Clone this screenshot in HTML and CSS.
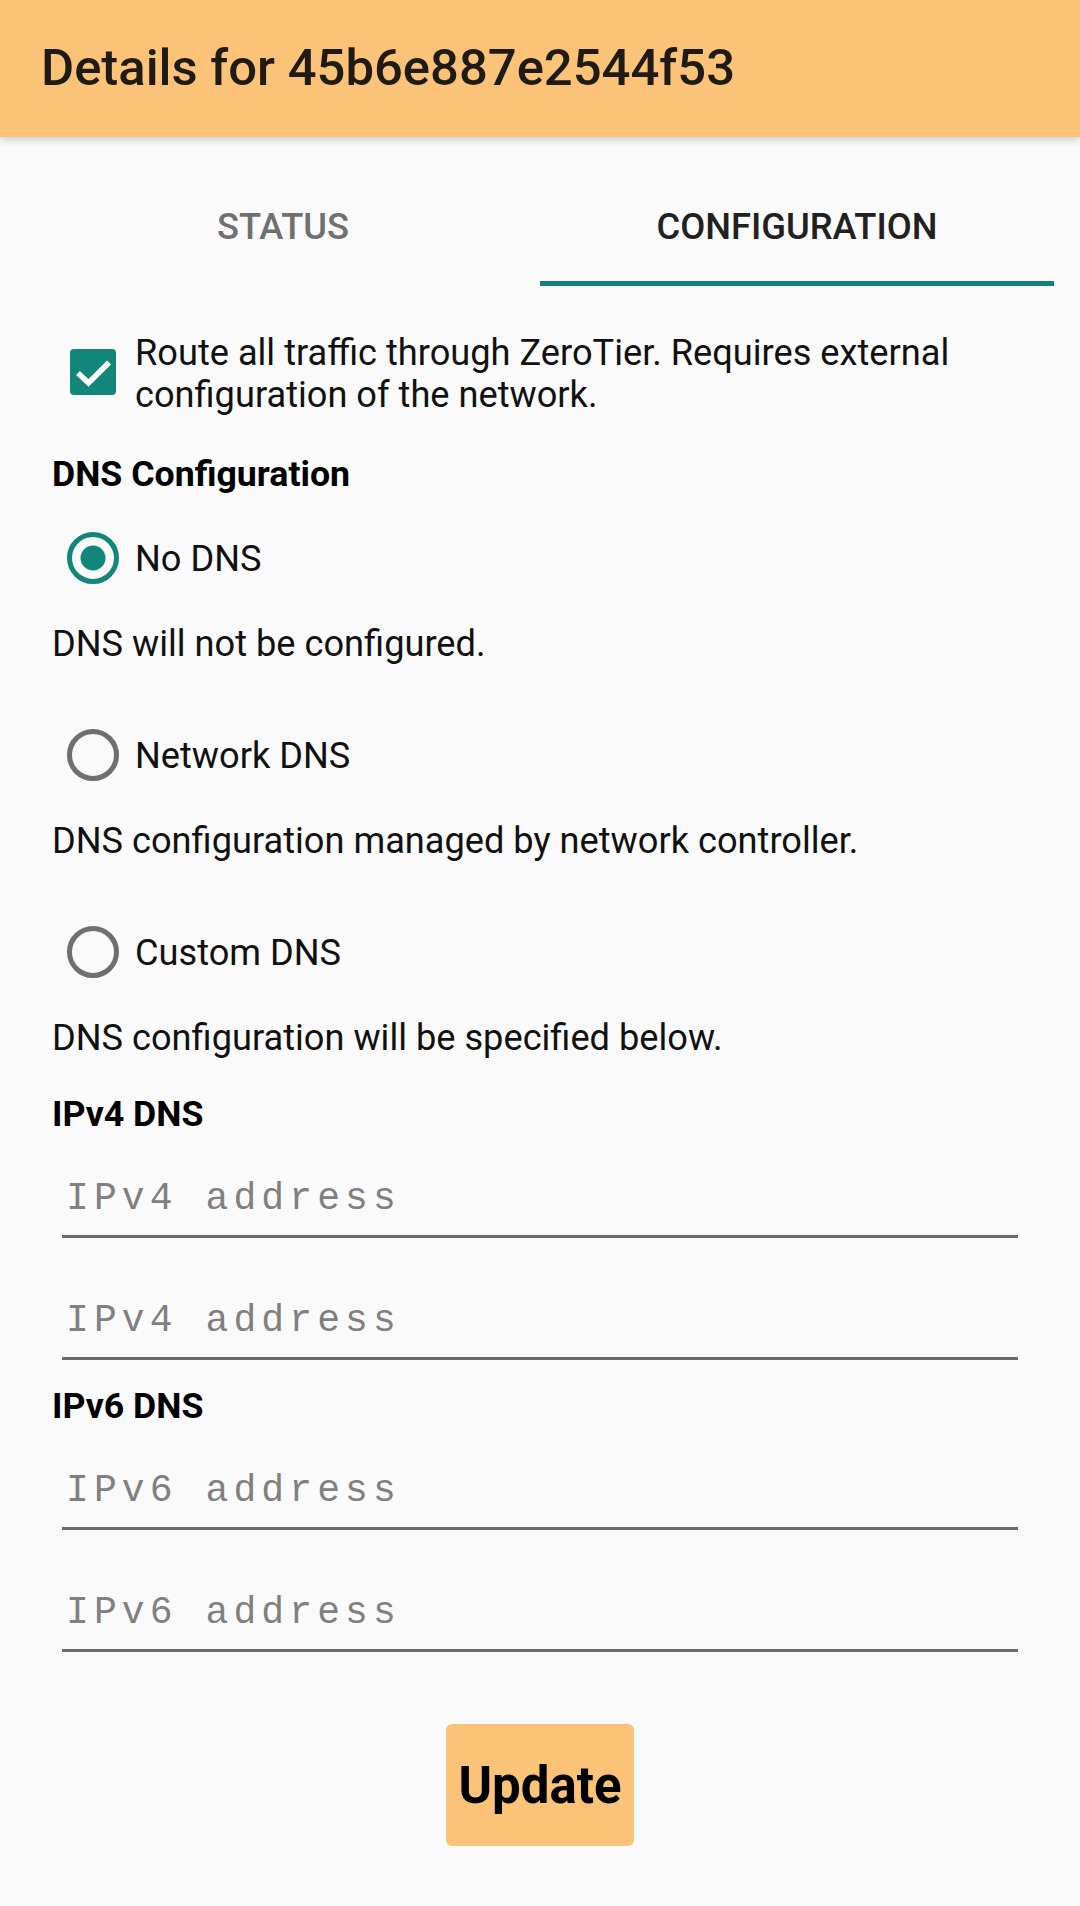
FILE: index.html
```html
<!DOCTYPE html>
<html lang="en">
<head>
<meta charset="utf-8">
<title>Details</title>
<link rel="stylesheet" href="styles.css">
</head>
<body>
<header class="appbar">
  <h1 class="appbar-title">Details for 45b6e887e2544f53</h1>
</header>
<nav class="tabs">
  <div class="tab">STATUS</div>
  <div class="tab tab-active">CONFIGURATION</div>
</nav>
<main class="content">
  <div class="check-row">
    <svg class="checkbox" viewBox="0 0 46 46" width="46" height="46">
      <rect x="0" y="0" width="46" height="46" rx="4" fill="#12867a"/>
      <polyline points="8,24 18.5,34 39,13.5" fill="none" stroke="#ffffff" stroke-width="5.5"/>
    </svg>
    <div class="check-label">Route all traffic through ZeroTier. Requires external configuration of the network.</div>
  </div>

  <div class="heading heading-dns">DNS Configuration</div>

  <div class="radio-group">
    <div class="radio-row">
      <svg class="radio" viewBox="0 0 52 52" width="52" height="52">
        <circle cx="26" cy="26" r="23.5" fill="none" stroke="#12867a" stroke-width="5"/>
        <circle cx="26" cy="26" r="12.5" fill="#12867a"/>
      </svg>
      <span class="radio-label">No DNS</span>
    </div>
    <div class="desc">DNS will not be configured.</div>
  </div>

  <div class="radio-group">
    <div class="radio-row">
      <svg class="radio" viewBox="0 0 52 52" width="52" height="52">
        <circle cx="26" cy="26" r="23.5" fill="none" stroke="#6f6f6f" stroke-width="5"/>
      </svg>
      <span class="radio-label">Network DNS</span>
    </div>
    <div class="desc">DNS configuration managed by network controller.</div>
  </div>

  <div class="radio-group">
    <div class="radio-row">
      <svg class="radio" viewBox="0 0 52 52" width="52" height="52">
        <circle cx="26" cy="26" r="23.5" fill="none" stroke="#6f6f6f" stroke-width="5"/>
      </svg>
      <span class="radio-label">Custom DNS</span>
    </div>
    <div class="desc">DNS configuration will be specified below.</div>
  </div>

  <div class="heading heading-ip">IPv4 DNS</div>
  <div class="field"><span class="placeholder">IPv4 address</span></div>
  <div class="field field-next"><span class="placeholder">IPv4 address</span></div>

  <div class="heading heading-ip6">IPv6 DNS</div>
  <div class="field"><span class="placeholder">IPv6 address</span></div>
  <div class="field field-next"><span class="placeholder">IPv6 address</span></div>

  <div class="actions">
    <button class="update-btn" type="button">Update</button>
  </div>
</main>
</body>
</html>
```

FILE: styles.css
```css
* {
  box-sizing: border-box;
}

html, body {
  margin: 0;
  padding: 0;
}

body {
  width: 1080px;
  min-height: 1906px;
  background: #fafafa;
  font-family: Roboto, "Noto Sans", "Liberation Sans", sans-serif;
  color: #1a1a1a;
  overflow: hidden;
}

.appbar {
  height: 137px;
  background: #fbc378;
  display: flex;
  align-items: center;
  padding-left: 41px;
  box-shadow: 0 3px 8px rgba(0, 0, 0, 0.18);
  position: relative;
  z-index: 1;
}

.appbar-title {
  margin: 0;
  font-size: 50.8px;
  font-weight: 500;
  color: #1f1b14;
  line-height: 1;
}

.tabs {
  display: flex;
  margin: 0 26px;
}

.tab {
  flex: 1;
  height: 149px;
  padding-top: 35px;
  display: flex;
  align-items: center;
  justify-content: center;
  font-size: 36.3px;
  font-weight: 500;
  color: #707070;
  border-bottom: 5px solid transparent;
}

.tab-active {
  color: #212121;
  border-bottom-color: #12807a;
}

.content {
  padding: 0 52px;
}

.check-row {
  display: flex;
  align-items: flex-start;
  margin-top: 46px;
}

.checkbox {
  flex: none;
  margin-left: 18px;
  margin-top: 17px;
}

.check-label {
  margin-left: 19px;
  font-size: 36.2px;
  line-height: 42px;
  color: #111;
}

.heading {
  font-size: 35.7px;
  font-weight: 700;
  line-height: 40px;
  color: #000;
}

.heading-dns {
  margin-top: 38px;
}

.radio-group + .radio-group {
  margin-top: 26px;
}

.radio-row {
  display: flex;
  align-items: center;
  height: 128px;
}

.radio {
  flex: none;
  margin-left: 15px;
}

.radio-label {
  margin-left: 16px;
  font-size: 36.2px;
  color: #111;
}

.desc {
  margin-top: 1px;
  font-size: 36.2px;
  line-height: 42px;
  color: #111;
}

.heading-ip {
  margin-top: 35px;
}

.heading-ip6 {
  margin-top: 26px;
}

.field {
  margin: 0 10px;
  padding: 40px 0 11px 4px;
  height: 104px;
  border-bottom: 3px solid #6b6b6b;
  line-height: 50px;
}

.field-next {
  margin-top: 18px;
}

.placeholder {
  font-family: "Liberation Mono", "DejaVu Sans Mono", monospace;
  font-size: 38px;
  letter-spacing: 5.1px;
  color: #808080;
}

.actions {
  display: flex;
  justify-content: center;
  margin-top: 72px;
}

.update-btn {
  width: 188px;
  height: 122px;
  border: none;
  border-radius: 6px;
  background: #fbc378;
  font-family: Roboto, "Liberation Sans", sans-serif;
  font-size: 51px;
  font-weight: 700;
  color: #000;
  padding: 0;
}
```
